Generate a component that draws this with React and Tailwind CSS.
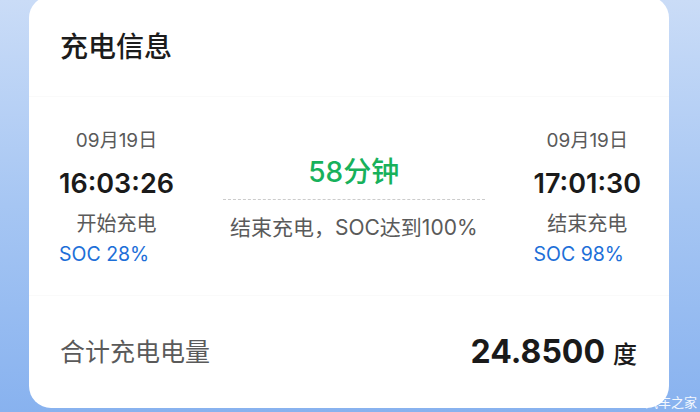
export default function App() {
  return (
    <div
      className="relative w-[700px] h-[412px] overflow-hidden bg-linear-to-b from-[#cadcf7] via-[#a6c6f3] to-[#88b2ef] pl-[29px] pr-[31px]"
      style={{ fontFamily: 'Inter, "Noto Sans CJK SC", sans-serif' }}
    >
      <div className="mt-[-4px] h-[412px] rounded-[22px] bg-white flex flex-col">
        <div className="h-[101px] flex items-center pl-[31px] border-b border-[#fafafa]">
          <h1 className="text-[28px] leading-[36px] font-medium text-[#1c1c1c] pt-[2px]">充电信息</h1>
        </div>

        <div className="h-[199px] flex border-b border-[#fafafa]">
          <div className="pl-[30px] pt-[32px] flex flex-col">
            <div className="text-[19px] leading-[24px] text-[#5a5a5a] text-center">09月19日</div>
            <div className="mt-[13px] text-[27px] leading-[36px] font-semibold text-[#1a1a1a] text-center">16:03:26</div>
            <div className="mt-[8px] text-[20px] leading-[28px] text-[#5a5a5a] text-center">开始充电</div>
            <div className="mt-[4px] text-[19.5px] leading-[24px] text-[#1d6fd8]">SOC 28%</div>
          </div>

          <div className="flex-1 px-[49px] pt-[58px] flex flex-col items-center">
            <div className="text-[28px] leading-[34px] font-medium text-[#17b15b]">58分钟</div>
            <div className="mt-[10px] w-full border-t border-dashed border-[#cccccc]"></div>
            <div className="mt-[15px] text-[21px] leading-[26px] text-[#5a5a5a] whitespace-nowrap">结束充电，SOC达到100%</div>
          </div>

          <div className="pr-[28px] pt-[32px] flex flex-col">
            <div className="text-[19px] leading-[24px] text-[#5a5a5a] text-center">09月19日</div>
            <div className="mt-[13px] text-[27px] leading-[36px] font-semibold text-[#1a1a1a] text-center">17:01:30</div>
            <div className="mt-[8px] text-[20px] leading-[28px] text-[#5a5a5a] text-center">结束充电</div>
            <div className="mt-[4px] text-[19.5px] leading-[24px] text-[#1d6fd8]">SOC 98%</div>
          </div>
        </div>

        <div className="flex-1 flex items-center justify-between pl-[31px] pr-[32px]">
          <span className="text-[25px] leading-[32px] text-[#5a5a5a]">合计充电电量</span>
          <span className="flex items-baseline gap-[8px] text-[#1a1a1a]">
            <span className="text-[32px] leading-[40px] font-bold">24.8500</span>
            <span className="text-[24px] leading-[30px] font-medium">度</span>
          </span>
        </div>
      </div>

      <span className="absolute right-[3px] bottom-[2px] text-[13px] leading-[16px] text-white/90">汽车之家</span>
    </div>
  )
}
